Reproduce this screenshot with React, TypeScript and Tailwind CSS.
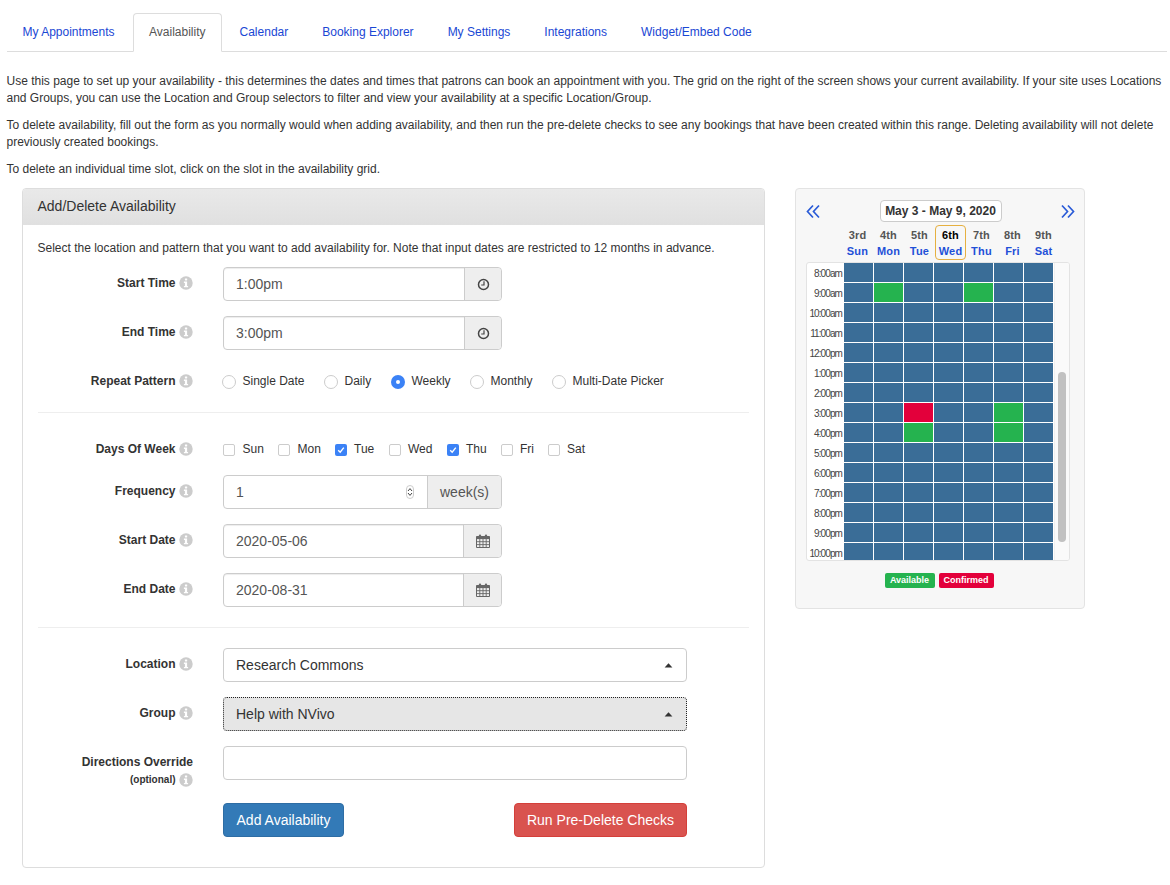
import React from "react";

const LINK = "text-[#1a47d4]";

function Info() {
  return (
    <svg width="14" height="14" viewBox="0 0 14 14" className="inline-block shrink-0">
      <circle cx="7" cy="7" r="6.7" fill="#cccccc" />
      <rect x="5.9" y="2.4" width="2.3" height="2.1" rx="0.4" fill="#fff" />
      <path d="M4.9 5.6H8.1V9.9H9.1V11.3H4.9V9.9H5.9V7H4.9Z" fill="#fff" />
    </svg>
  );
}

function Clock() {
  return (
    <svg width="13" height="13" viewBox="0 0 13 13">
      <circle cx="6.5" cy="6.5" r="5" fill="none" stroke="#444" strokeWidth="1.5" />
      <path d="M7 3.2V7H4.2" fill="none" stroke="#444" strokeWidth="1.2" />
    </svg>
  );
}

function CalendarIcon() {
  return (
    <svg width="14" height="14" viewBox="0 0 14 14">
      <path d="M0.5 2.5H13.5V13.5H0.5Z" fill="none" stroke="#666" strokeWidth="1" />
      <rect x="0.5" y="2.5" width="13" height="2.6" fill="#666" />
      <rect x="3" y="0.5" width="2" height="3.2" rx="0.8" fill="#666" />
      <rect x="9" y="0.5" width="2" height="3.2" rx="0.8" fill="#666" />
      <path d="M0.5 7.7H13.5M0.5 10.6H13.5M3.8 5V13.5M7 5V13.5M10.2 5V13.5" stroke="#666" strokeWidth="0.9" fill="none" />
    </svg>
  );
}

function Caret() {
  return (
    <svg width="9" height="5" viewBox="0 0 9 5" className="shrink-0">
      <path d="M4.5 0.3L8.4 4.6H0.6Z" fill="#333" />
    </svg>
  );
}

function Chevrons({ dir }: { dir: "left" | "right" }) {
  return (
    <svg width="15" height="15" viewBox="0 0 15 15" className={dir === "right" ? "-scale-x-100 -mr-[1px]" : ""}>
      <path d="M7 1.5L1.5 7.5L7 13.5M13 1.5L7.5 7.5L13 13.5" fill="none" stroke="#2a5bd7" strokeWidth="1.7" />
    </svg>
  );
}

function Label({ children, up }: { children: React.ReactNode; up?: boolean }) {
  return (
    <div className={`w-[155px] shrink-0 flex items-center justify-end gap-[3.5px] text-xs font-bold text-[#333] ${up ? "-mt-[1px]" : ""}`}>
      <span>{children}</span>
      <Info />
    </div>
  );
}

function Addon({ children, w }: { children: React.ReactNode; w: string }) {
  return (
    <div className={`${w} h-full bg-[#eeeeee] border-l border-[#cccccc] flex items-center justify-center text-sm text-[#555] rounded-r-[3px]`}>
      {children}
    </div>
  );
}

function InputRow({ label, value, icon, mt }: { label: string; value: string; icon: React.ReactNode; mt: string }) {
  const isDate = label.includes("Date");
  return (
    <div className={`flex ${mt} h-[34px]`}>
      <div className="flex items-start pt-[8px] h-full">
        <Label>{label}</Label>
      </div>
      <div className="ml-[30px] w-[279px] h-full border border-[#cccccc] rounded flex overflow-hidden shadow-[inset_0_1px_1px_rgba(0,0,0,0.075)]">
        <div className="flex-1 px-3 flex items-center text-sm text-[#555]">{value}</div>
        <Addon w={isDate ? "w-[38px]" : "w-[37px]"}>{icon}</Addon>
      </div>
    </div>
  );
}

function Radio({ on, label, w }: { on?: boolean; label: string; w: string }) {
  return (
    <div className={`flex items-center ${w}`}>
      {on ? (
        <span className="w-[14px] h-[14px] rounded-full bg-[#3b82f6] flex items-center justify-center mt-[1px]">
          <span className="w-[4px] h-[4px] rounded-full bg-white" />
        </span>
      ) : (
        <span className="w-[14px] h-[14px] rounded-full bg-white border border-[#cccccc] mt-[1px]" />
      )}
      <span className="ml-[6.5px] text-xs text-[#333] -mt-[2px]">{label}</span>
    </div>
  );
}

function Check({ on, label, w }: { on?: boolean; label: string; w: string }) {
  return (
    <div className={`flex items-center ${w}`}>
      {on ? (
        <span className="w-[12px] h-[12px] rounded-[2px] bg-[#3b82f6] flex items-center justify-center mt-[1px]">
          <svg width="8" height="8" viewBox="0 0 8 8">
            <path d="M1.2 4.2L3.2 6.2L6.8 1.6" fill="none" stroke="#fff" strokeWidth="1.4" />
          </svg>
        </span>
      ) : (
        <span className="w-[12px] h-[12px] rounded-[2px] bg-white border border-[#cccccc] mt-[1px]" />
      )}
      <span className="ml-[7.5px] text-xs text-[#333] -mt-[2px]">{label}</span>
    </div>
  );
}

function SelectRow({ label, value, focus, mt }: { label: string; value: string; focus?: boolean; mt: string }) {
  return (
    <div className={`flex ${mt} h-[34px]`}>
      <div className="flex items-start pt-[8px] h-full">
        <Label>{label}</Label>
      </div>
      <div
        className={`ml-[30px] w-[464px] h-full rounded flex items-center justify-between pl-3 pr-[13px] text-sm ${
          focus ? "border border-dotted border-[#222] bg-[#e6e6e6] text-[#333]" : "border border-[#cccccc] bg-white text-[#333]"
        }`}
      >
        <span>{value}</span>
        <Caret />
      </div>
    </div>
  );
}

const TIMES = ["8:00am", "9:00am", "10:00am", "11:00am", "12:00pm", "1:00pm", "2:00pm", "3:00pm", "4:00pm", "5:00pm", "6:00pm", "7:00pm", "8:00pm", "9:00pm", "10:00pm"];
const GREEN = "#25b34f";
const RED = "#e3003b";
const SPECIAL: Record<string, string> = {
  "1-1": GREEN,
  "1-4": GREEN,
  "7-2": RED,
  "7-5": GREEN,
  "8-2": GREEN,
  "8-5": GREEN,
};
const DAYS = [
  ["3rd", "Sun"],
  ["4th", "Mon"],
  ["5th", "Tue"],
  ["6th", "Wed"],
  ["7th", "Thu"],
  ["8th", "Fri"],
  ["9th", "Sat"],
];

function Schedule() {
  return (
    <div className="ml-[30px] w-[290px] h-[421px] shrink-0 bg-[#f7f7f7] border border-[#e3e3e3] rounded px-[10px] pt-[11px]">
      <div className="flex items-center justify-between h-[22px]">
        <Chevrons dir="left" />
        <div className="w-[122px] h-[22px] bg-white border border-[#cccccc] rounded flex items-center justify-center text-xs font-bold text-[#333]">
          May 3 - May 9, 2020
        </div>
        <Chevrons dir="right" />
      </div>
      <div className="ml-[36px] mt-[3px] grid grid-cols-[repeat(7,31px)] h-[35px] text-[11px] font-bold">
        {DAYS.map(([d, n]) => (
          <div
            key={n}
            className={`flex flex-col items-center justify-center rounded-[4px] leading-[16px] tracking-[0.2px] ${
              n === "Wed" ? "border border-[#e6b040] text-black" : "text-[#555]"
            }`}
          >
            <span>{d}</span>
            <span className="text-[#1f50d8]">{n}</span>
          </div>
        ))}
      </div>
      <div className="mt-[2px] w-[264px] h-[299px] bg-white border border-[#e3e3e3] rounded-[3px] flex overflow-hidden">
        <div className="w-[37px] shrink-0 flex flex-col">
          {TIMES.map((t) => (
            <div key={t} className="h-[20px] shrink-0 flex items-center justify-end pr-[2px] text-[10px] text-[#444] tracking-[-0.9px]">
              {t}
            </div>
          ))}
        </div>
        <div className="grid grid-cols-[repeat(7,30px)] auto-rows-[20px] w-[210px] shrink-0">
          {TIMES.map((t, r) =>
            DAYS.map((_, c) => (
              <div key={`${r}-${c}`} className="border-r border-b border-white" style={{ backgroundColor: SPECIAL[`${r}-${c}`] ?? "#3a6d97" }} />
            ))
          )}
        </div>
        <div className="flex-1 bg-[#fafafa] border-l border-[#f0f0f0] relative">
          <div className="absolute left-[3px] top-[109px] w-[8px] h-[170px] rounded-full bg-[#c1c1c1]" />
        </div>
      </div>
      <div className="mt-[12px] flex justify-center gap-1 pr-[2px] text-[9px] font-bold text-white">
        <span className="w-[50px] h-[15px] rounded-[2px] flex items-center justify-center bg-[#25b34f]">Available</span>
        <span className="w-[55px] h-[15px] rounded-[2px] flex items-center justify-center bg-[#e3003b]">Confirmed</span>
      </div>
    </div>
  );
}

function FormPanel() {
  return (
    <div className="ml-[15px] w-[743px] h-[680px] shrink-0 border border-[#dddddd] rounded bg-white">
      <div className="h-[36px] pl-[14.5px] pb-[2px] flex items-center text-sm text-[#333] bg-gradient-to-b from-[#e9e9e9] to-[#e0e0e0] rounded-t-[3px]">
        Add/Delete Availability
      </div>
      <div className="px-[15px]">
        <p className="mt-[15px] -ml-[0.5px] text-xs leading-[17px] text-[#333]">
          Select the location and pattern that you want to add availability for. Note that input dates are restricted to 12 months in advance.
        </p>
        <InputRow label="Start Time" value="1:00pm" icon={<Clock />} mt="mt-[10px]" />
        <InputRow label="End Time" value="3:00pm" icon={<Clock />} mt="mt-[15px]" />
        <div className="flex mt-[16px] h-[30px] items-start pt-[8px]">
          <Label up>Repeat Pattern</Label>
          <div className="ml-[29px] flex">
            <Radio label="Single Date" w="w-[102px]" />
            <Radio label="Daily" w="w-[67px]" />
            <Radio on label="Weekly" w="w-[79px]" />
            <Radio label="Monthly" w="w-[82px]" />
            <Radio label="Multi-Date Picker" w="w-[120px]" />
          </div>
        </div>
        <div className="mt-[16px] h-px bg-[#eeeeee] w-[711px]" />
        <div className="flex mt-[28px] h-[17px] items-center">
          <Label up>Days Of Week</Label>
          <div className="ml-[30px] flex">
            <Check label="Sun" w="w-[55px]" />
            <Check label="Mon" w="w-[56.5px]" />
            <Check on label="Tue" w="w-[54px]" />
            <Check label="Wed" w="w-[58px]" />
            <Check on label="Thu" w="w-[54px]" />
            <Check label="Fri" w="w-[47px]" />
            <Check label="Sat" w="w-[50px]" />
          </div>
        </div>
        <div className="flex mt-[17px] h-[34px]">
          <div className="flex items-start pt-[8px] h-full">
            <Label>Frequency</Label>
          </div>
          <div className="ml-[30px] w-[279px] h-full border border-[#cccccc] rounded flex overflow-hidden">
            <div className="flex-1 pl-3 pr-[13px] flex items-center justify-between text-sm text-[#555]">
              <span>1</span>
              <span className="w-[8px] h-[14px] border border-[#cccccc] rounded-[4px] flex items-center justify-center">
                <svg width="6" height="10" viewBox="0 0 6 10">
                  <path d="M1 4L3 1.6L5 4M1 6L3 8.4L5 6" fill="none" stroke="#444" strokeWidth="1" />
                </svg>
              </span>
            </div>
            <Addon w="w-[74px]">week(s)</Addon>
          </div>
        </div>
        <InputRow label="Start Date" value="2020-05-06" icon={<CalendarIcon />} mt="mt-[15px]" />
        <InputRow label="End Date" value="2020-08-31" icon={<CalendarIcon />} mt="mt-[15px]" />
        <div className="mt-[20px] h-px bg-[#eeeeee] w-[711px]" />
        <SelectRow label="Location" value="Research Commons" mt="mt-[20px]" />
        <SelectRow label="Group" value="Help with NVivo" focus mt="mt-[15px]" />
        <div className="flex mt-[15px] h-[34px]">
          <div className="w-[155px] shrink-0 flex flex-col items-end pt-[8px] text-xs font-bold text-[#333] leading-[17px]">
            <span>Directions Override</span>
            <span className="flex items-center gap-[3.5px] text-[10px] leading-[14px] mt-[2px]">
              (optional) <Info />
            </span>
          </div>
          <div className="ml-[30px] w-[464px] h-full border border-[#cccccc] rounded bg-white" />
        </div>
        <div className="flex mt-[23px] h-[34px] ml-[185px] w-[464px] justify-between">
          <div className="w-[121px] h-full rounded bg-[#337ab7] border border-[#2e6da4] flex items-center justify-center text-sm text-white">Add Availability</div>
          <div className="w-[173px] h-full rounded bg-[#d9534f] border border-[#d43f3a] flex items-center justify-center text-sm text-white">Run Pre-Delete Checks</div>
        </div>
      </div>
    </div>
  );
}

export default function App() {
  const tabs = ["Calendar", "Booking Explorer", "My Settings", "Integrations", "Widget/Embed Code"];
  return (
    <div className="w-[1170px] h-[885px] overflow-hidden bg-white font-['Liberation_Sans',Arial,sans-serif] text-[#333]">
      <div className="pt-[13px] pl-[7px] pr-[3px]">
        <div className="flex h-[39px] border-b border-[#dddddd] text-xs">
          <div className={`h-[39px] pl-[15.5px] pr-[16.5px] pb-[2px] mr-[2px] flex items-center ${LINK}`}>My Appointments</div>
          <div className="h-[39px] px-[15px] pb-[2px] mr-[2px] flex items-center bg-white border border-[#dddddd] border-b-white rounded-t text-[#555]">Availability</div>
          {tabs.map((t) => (
            <div key={t} className={`h-[39px] px-[16px] pb-[2px] mr-[2px] flex items-center ${LINK}`}>
              {t}
            </div>
          ))}
        </div>
      </div>
      <div className="pl-[6.5px] pr-[3px] pt-[21px] text-xs leading-[17px] text-[#333]">
        <p className="mb-[10px]">
          Use this page to set up your availability - this determines the dates and times that patrons can book an appointment with you. The grid on the right of the screen shows your current availability. If your site uses Locations and Groups, you can use the Location and Group selectors to filter and view your availability at a specific Location/Group.
        </p>
        <p className="mb-[10px]">
          To delete availability, fill out the form as you normally would when adding availability, and then run the pre-delete checks to see any bookings that have been created within this range. Deleting availability will not delete previously created bookings.
        </p>
        <p className="mb-[10px]">To delete an individual time slot, click on the slot in the availability grid.</p>
      </div>
      <div className="flex mt-[10px] pl-[7px]">
        <FormPanel />
        <Schedule />
      </div>
    </div>
  );
}
